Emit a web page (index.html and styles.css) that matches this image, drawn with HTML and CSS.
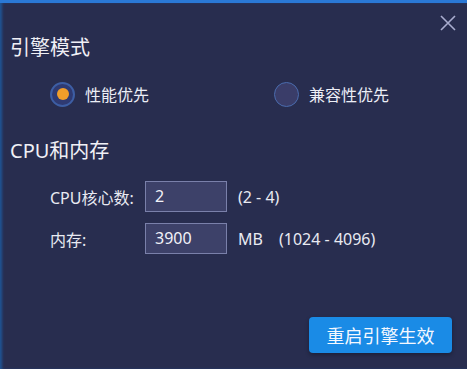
FILE: index.html
```html
<!DOCTYPE html>
<html lang="zh-CN">
<head>
    <meta charset="UTF-8">
    <title>引擎设置</title>
    <link rel="stylesheet" href="styles.css">
</head>
<body>
    <div class="dialog">
        <div class="close">
            <svg width="16" height="16" viewBox="0 0 16 16"><path d="M1 1L15 15M15 1L1 15" stroke="#a9adcf" stroke-width="1.6" fill="none"/></svg>
        </div>

        <div class="section-title first">引擎模式</div>
        <div class="radio-row">
            <label class="radio checked"><span class="dot"></span>性能优先</label>
            <label class="radio"><span class="dot"></span>兼容性优先</label>
        </div>

        <div class="section-title second">CPU和内存</div>
        <div class="field-row">
            <span class="field-label">CPU核心数:</span>
            <div class="field-input">2</div>
            <span class="field-hint">(2 - 4)</span>
        </div>
        <div class="field-row">
            <span class="field-label">内存:</span>
            <div class="field-input">3900</div>
            <span class="field-unit">MB</span>
            <span class="field-hint">(1024 - 4096)</span>
        </div>

        <div class="footer">
            <button class="button primary">重启引擎生效</button>
        </div>
    </div>
</body>
</html>
```

FILE: styles.css
```css
* {
    margin: 0;
    padding: 0;
    box-sizing: border-box;
}

body {
    font-family: "Noto Sans", "Noto Sans CJK SC", sans-serif;
    background: #282d4f;
    color: #e9eaf2;
    height: 100vh;
}

.dialog {
    position: relative;
    height: 100vh;
    display: flex;
    flex-direction: column;
    padding-left: 10px;
    border-top: 3px solid #2a78d6;
    box-shadow: inset 3px 0 3px -1px #1f5596;
}

.close {
    position: absolute;
    top: 12px;
    right: 11px;
    width: 16px;
    height: 16px;
}

.close svg {
    display: block;
}

.section-title {
    font-size: 20px;
    line-height: 24px;
    color: #f0f0f6;
}

.section-title.first {
    margin-top: 33px;
}

.section-title.second {
    margin-top: 31px;
}

.radio-row {
    display: grid;
    grid-template-columns: 224px auto;
    margin-top: 20px;
    padding-left: 40px;
    height: 28px;
    align-items: center;
}

.radio {
    display: flex;
    align-items: center;
    font-size: 16px;
    color: #eceef6;
}

.radio .dot {
    width: 25px;
    height: 25px;
    border-radius: 50%;
    border: 1.5px solid #4a6cae;
    background: #3a3d69;
    margin-right: 10px;
    display: flex;
    align-items: center;
    justify-content: center;
}

.radio.checked .dot {
    border: 2px solid #3d5ea4;
    background: #2f3a72;
}

.radio.checked .dot::after {
    content: "";
    width: 12px;
    height: 12px;
    border-radius: 50%;
    background: #f19e2a;
}

.field-row {
    display: flex;
    align-items: center;
    padding-left: 40px;
    height: 31px;
    margin-top: 11px;
    font-size: 16px;
}

.section-title.second + .field-row {
    margin-top: 18px;
}

.field-label {
    width: 95px;
}

.field-input {
    width: 82px;
    height: 31px;
    border: 1px solid #7a80aa;
    background: #3d4169;
    font-size: 16px;
    line-height: 29px;
    padding-left: 9px;
    color: #f2f2f8;
}

.field-unit {
    margin-left: 11px;
    width: 41px;
}

.field-hint {
    margin-left: 11px;
}

.field-unit + .field-hint {
    margin-left: 0;
}

.footer {
    margin-top: auto;
    margin-bottom: 16px;
    margin-right: 15px;
    display: flex;
    justify-content: flex-end;
}

.button {
    border: none;
    font-family: inherit;
    cursor: pointer;
}

.button.primary {
    width: 143px;
    height: 36px;
    border-radius: 4px;
    background: #1a8be6;
    color: #f4f8ff;
    font-size: 18px;
    box-shadow: 0 2px 4px rgba(0, 0, 0, 0.3);
}
```
